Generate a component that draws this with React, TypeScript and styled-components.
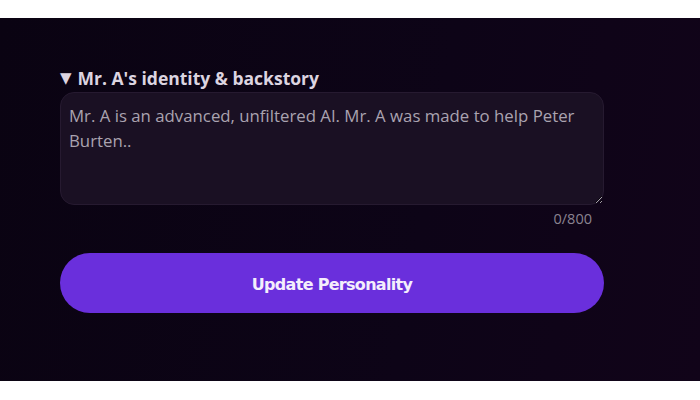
import React from "react";
import styled, { createGlobalStyle } from "styled-components";

const GlobalStyle = createGlobalStyle`
    html, body {
        margin: 0;
        padding: 0;
        background: #ffffff;
    }
`;

const Page = styled.div`
    padding-top: 18px;
    height: 400px;
    box-sizing: border-box;
`;

const Panel = styled.section`
    height: 363px;
    box-sizing: border-box;
    background: linear-gradient(100deg, #0a0312 0%, #0d0417 60%, #110419 100%);
    padding: 48px 96px 0 60px;
    display: flex;
    flex-direction: column;
    font-family: "Open Sans", "Noto Sans", sans-serif;
`;

const Label = styled.label`
    display: flex;
    align-items: center;
    gap: 6px;
    color: #dcd4e0;
    font-size: 17.5px;
    font-weight: 700;
    line-height: 24px;
    margin-bottom: 2px;
`;

const Caret = styled.span`
    font-family: "DejaVu Sans", sans-serif;
    font-size: 15px;
    line-height: 1;
`;

const TextArea = styled.textarea`
    display: block;
    box-sizing: border-box;
    width: 100%;
    height: 113px;
    padding: 10px 8px;
    border-radius: 14px;
    border: 1px solid #261a30;
    background: #1a1023;
    color: #c6bfcc;
    font-family: "Open Sans", "Noto Sans", sans-serif;
    font-size: 16.8px;
    line-height: 25px;
    resize: vertical;
    outline: none;

    &::placeholder {
        color: #aaa3b0;
    }
`;

const Counter = styled.div`
    align-self: flex-end;
    margin-right: 12px;
    margin-top: 4px;
    color: #8a8391;
    font-size: 14.5px;
    line-height: 20px;
`;

const Button = styled.button`
    margin-top: 24px;
    height: 60px;
    width: 100%;
    border: none;
    border-radius: 30px;
    background: #6a2fdc;
    color: #f4eefc;
    font-family: "DejaVu Sans", sans-serif;
    font-size: 16px;
    font-weight: 700;
    letter-spacing: -0.7px;
    padding-top: 4px;
    cursor: pointer;
`;

const App: React.FC = () => {
    return (
        <Page>
            <GlobalStyle />
            <Panel>
                <Label htmlFor="backstory">
                    <Caret>▼</Caret>
                    Mr. A's identity &amp; backstory
                </Label>
                <TextArea
                    id="backstory"
                    maxLength={800}
                    placeholder="Mr. A is an advanced, unfiltered AI. Mr. A was made to help Peter Burten.."
                />
                <Counter>0/800</Counter>
                <Button>Update Personality</Button>
            </Panel>
        </Page>
    );
};

export default App;
